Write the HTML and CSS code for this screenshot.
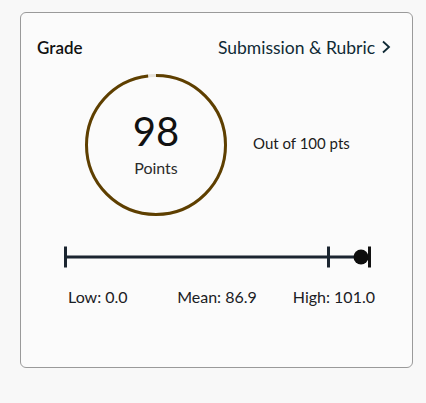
FILE: index.html
```html
<!DOCTYPE html>
<html lang="en">
<head>
  <meta charset="UTF-8" />
  <meta name="viewport" content="width=device-width, initial-scale=1.0" />
  <title>Grade</title>
  <link rel="stylesheet" href="styles.css">
</head>
<body>
  <div class="card">

    <!-- HEADER -->
    <div class="card-header">
      <span class="title">Grade</span>
      <a class="link" href="#">Submission &amp; Rubric
        <svg class="chevron" width="10" height="14" viewBox="0 0 10 14">
          <path d="M2 1.5 L8 7 L2 12.5" fill="none" stroke="#0f2a35" stroke-width="1.8"/>
        </svg>
      </a>
    </div>

    <!-- SCORE -->
    <div class="score-row">
      <div class="ring">
        <svg class="ring-svg" width="142" height="142" viewBox="0 0 142 142">
          <circle cx="71" cy="71" r="69.5" fill="none" stroke="#e6e2da" stroke-width="3"/>
          <circle cx="71" cy="71" r="69.5" fill="none" stroke="#5e3f00" stroke-width="3"
                  stroke-dasharray="428 437" transform="rotate(-90 71 71)"/>
        </svg>
        <div class="score">98</div>
        <div class="score-label">Points</div>
      </div>
      <div class="out-of">Out of 100 pts</div>
    </div>

    <!-- STATS -->
    <div class="stats">
      <svg class="bar" width="308" height="22" viewBox="0 0 308 22">
        <line x1="1.5" y1="11" x2="306" y2="11" stroke="#1b2530" stroke-width="3"/>
        <line x1="1.5" y1="0.5" x2="1.5" y2="21.5" stroke="#1b2530" stroke-width="3"/>
        <line x1="264.5" y1="0.5" x2="264.5" y2="21.5" stroke="#1b2530" stroke-width="3"/>
        <line x1="305.5" y1="0.5" x2="305.5" y2="21.5" stroke="#111" stroke-width="3"/>
        <circle cx="297" cy="11" r="7.5" fill="#0d0d0d"/>
      </svg>
      <div class="stat-labels">
        <span class="low">Low: 0.0</span>
        <span class="mean">Mean: 86.9</span>
        <span class="high">High: 101.0</span>
      </div>
    </div>

  </div>
</body>
</html>
```

FILE: styles.css
```css
body {
  font-family: Lato, "Open Sans", sans-serif;
  background-color: #f8f8f8;
  margin: 0;
  padding: 12px 13px 0 20px;
  color: #1a2024;
}

.card {
  width: 393px;
  height: 356px;
  box-sizing: border-box;
  background-color: #fbfbfb;
  border: 1px solid #9a9a9a;
  border-radius: 6px;
  padding: 23px 21px 0 16px;
}

.card-header {
  display: flex;
  justify-content: space-between;
  align-items: center;
  height: 22px;
}

.title {
  font-size: 17px;
  font-weight: 600;
  color: #111;
}

.link {
  display: flex;
  align-items: center;
  gap: 6px;
  font-size: 17.5px;
  color: #0f2a35;
  text-decoration: none;
}

.score-row {
  display: flex;
  align-items: center;
  margin-top: 16px;
  padding-left: 48px;
}

.ring {
  position: relative;
  width: 142px;
  height: 142px;
  display: flex;
  flex-direction: column;
  align-items: center;
  justify-content: center;
}

.ring-svg {
  position: absolute;
  top: 0;
  left: 0;
}

.score {
  font-size: 40px;
  line-height: 44px;
  color: #111;
  margin-top: -4px;
}

.score-label {
  font-size: 16px;
  line-height: 20px;
  color: #2b2b2b;
  margin-top: 5px;
}

.out-of {
  margin-left: 26px;
  font-size: 15px;
  color: #1c1c1c;
  margin-top: -4px;
}

.stats {
  margin-top: 30px;
  padding-left: 27px;
}

.bar {
  display: block;
}

.stat-labels {
  display: grid;
  grid-template-columns: 1fr auto 1fr;
  width: 306px;
  margin-top: 19px;
  font-size: 16px;
  line-height: 20px;
  color: #1a2024;
}

.low {
  padding-left: 4px;
}

.high {
  justify-self: end;
  margin-right: -5px;
}
```
